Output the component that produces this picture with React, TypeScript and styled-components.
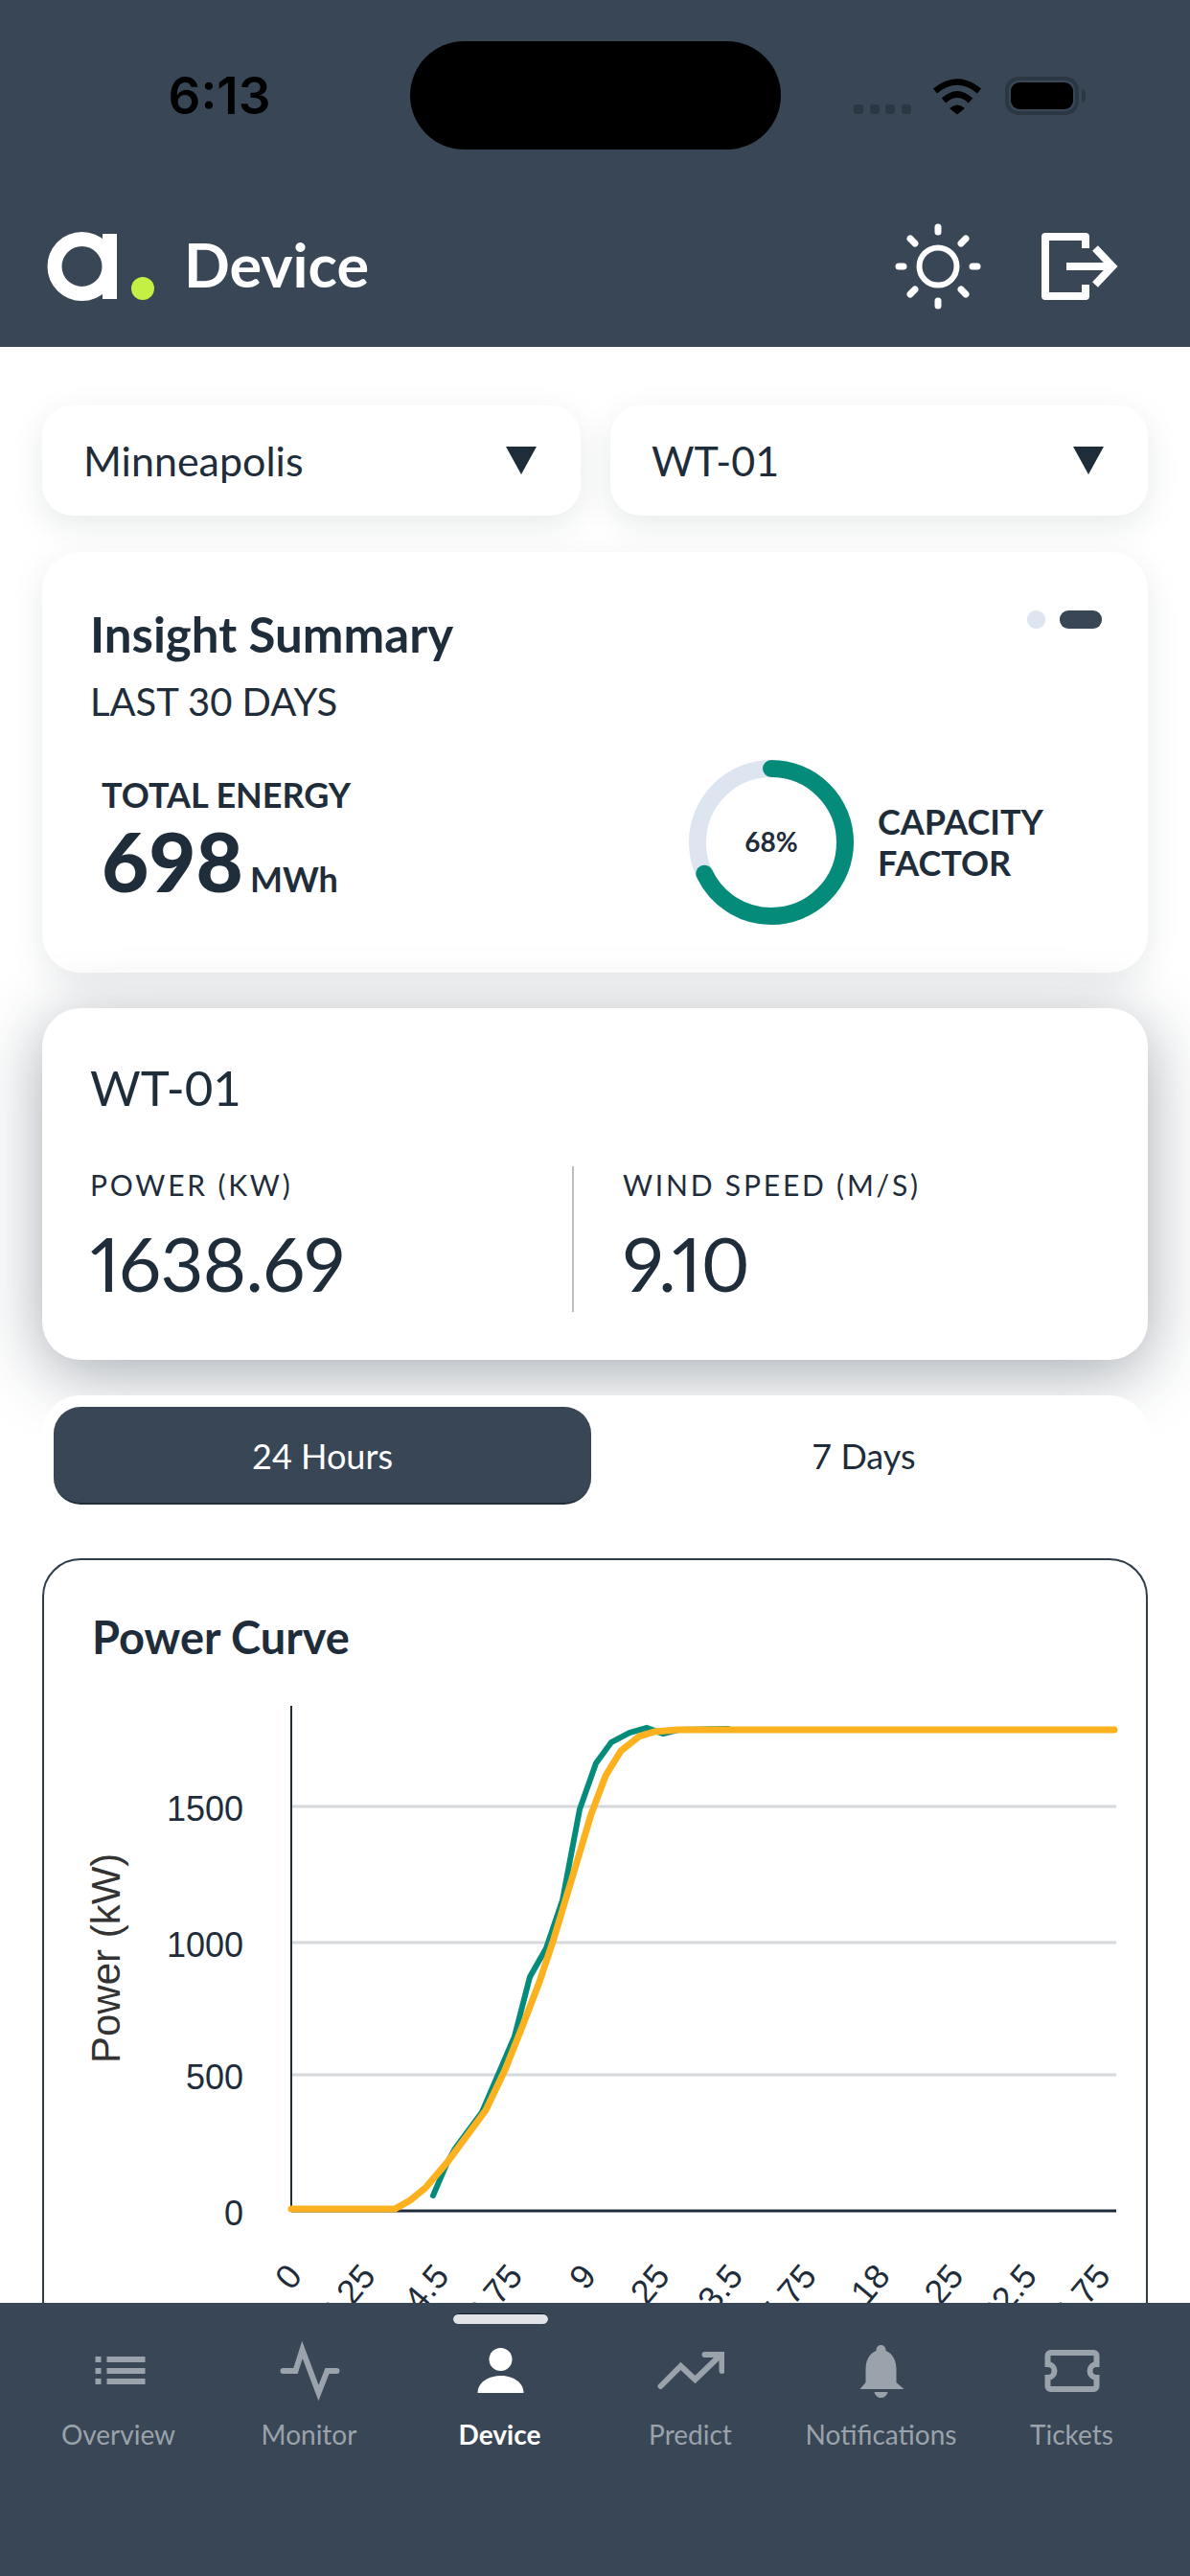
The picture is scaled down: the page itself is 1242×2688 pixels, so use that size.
import React from 'react';
import styled, { createGlobalStyle } from 'styled-components';

const GlobalStyle = createGlobalStyle`
  html, body {
    margin: 0;
    padding: 0;
    background: #fff;
  }
  * {
    box-sizing: border-box;
  }
`;

const INK = '#1f2d3b';
const SLATE = '#394655';
const TEAL = '#058b7a';
const AMBER = '#fdb11f';
const MUTED = '#9aa2ab';
const BODY_FONT = 'Lato, "Noto Sans", sans-serif';
const CHART_FONT = '"Liberation Sans", Arial, sans-serif';

const Screen = styled.div`
  width: 1242px;
  height: 2688px;
  display: flex;
  flex-direction: column;
  overflow: hidden;
  font-family: ${BODY_FONT};
  color: ${INK};
`;

const Header = styled.header`
  flex: 0 0 362px;
  background: ${SLATE};
`;

const StatusBar = styled.div`
  display: grid;
  grid-template-columns: 428px 387px 1fr;
  padding-top: 43px;
`;

const Clock = styled.div`
  padding-left: 30px;
  text-align: center;
  font-family: Inter, sans-serif;
  font-size: 53px;
  font-weight: 600;
  line-height: 114px;
  color: #000;
`;

const Island = styled.div`
  height: 113px;
  border-radius: 57px;
  background: #000;
`;

const StatusIcons = styled.svg`
  display: block;
  margin: 32px 0 0 70px;
`;

const TitleRow = styled.div`
  display: flex;
  align-items: center;
  height: 100px;
  margin-top: 71px;
  padding-left: 45px;
`;

const PageTitle = styled.h1`
  flex: 1;
  margin: -6px 0 0 27px;
  font-size: 63px;
  font-weight: 700;
  color: #fff;
`;

const SunIcon = styled.svg`
  display: block;
`;

const ExitIcon = styled.svg`
  display: block;
  margin: 0 69px 0 54px;
`;

const Content = styled.main`
  flex: 1;
  min-height: 0;
  overflow: hidden;
  padding: 61px 44px 0;
`;

const SelectRow = styled.div`
  display: grid;
  grid-template-columns: 562px 561px;
  gap: 31px;
`;

const Select = styled.div`
  display: flex;
  align-items: center;
  justify-content: space-between;
  height: 115px;
  padding: 0 46px 0 43px;
  border-radius: 32px;
  background: #fff;
  box-shadow: 0 10px 34px rgba(30, 45, 60, 0.1);
  font-size: 43px;
`;

const Caret = styled.span`
  width: 0;
  height: 0;
  border-left: 16px solid transparent;
  border-right: 16px solid transparent;
  border-top: 29px solid ${INK};
`;

const InsightCard = styled.section`
  height: 439px;
  margin-top: 38px;
  padding: 56px 48px 0 50px;
  border-radius: 40px;
  background: #fff;
  box-shadow: 0 10px 34px rgba(30, 45, 60, 0.1);
`;

const InsightTop = styled.div`
  display: flex;
  justify-content: space-between;
`;

const CardTitle = styled.h2`
  margin: 0;
  font-size: 51px;
  font-weight: 700;
  line-height: 60px;
`;

const Subtitle = styled.div`
  margin-top: 16px;
  font-size: 40px;
  line-height: 48px;
`;

const Pager = styled.div`
  display: flex;
  gap: 15px;
  margin-top: 5px;
`;

const PagerDot = styled.span<{ $active?: boolean }>`
  width: ${({ $active }) => ($active ? '44px' : '19px')};
  height: 19px;
  border-radius: 9px;
  background: ${({ $active }) => ($active ? SLATE : '#dde5f0')};
`;

const InsightBody = styled.div`
  display: grid;
  grid-template-columns: 625px auto;
  margin-top: 37px;
`;

const EnergyBlock = styled.div`
  padding: 15px 0 0 12px;
`;

const EnergyLabel = styled.div`
  font-size: 36px;
  font-weight: 700;
  line-height: 42px;
`;

const EnergyValue = styled.div`
  display: flex;
  align-items: baseline;
  gap: 7px;
  margin-top: 4px;
  font-size: 85px;
  font-weight: 900;
  line-height: 88px;
`;

const EnergyUnit = styled.span`
  font-size: 36px;
  font-weight: 700;
`;

const CapacityBlock = styled.div`
  display: flex;
  align-items: center;
  gap: 25px;
`;

const CapacityLabel = styled.div`
  font-size: 36px;
  font-weight: 700;
  line-height: 43px;
`;

const LiveCard = styled.section`
  height: 367px;
  margin-top: 37px;
  padding: 52px 50px 0;
  border-radius: 40px;
  background: #fff;
  box-shadow: 0 14px 70px rgba(30, 45, 60, 0.4);
`;

const DeviceName = styled.div`
  font-size: 51px;
  line-height: 62px;
`;

const Readings = styled.div`
  display: grid;
  grid-template-columns: 503px 1fr;
  margin-top: 51px;
  height: 152px;
`;

const Reading = styled.div<{ $divided?: boolean }>`
  padding-left: ${({ $divided }) => ($divided ? '51px' : '0')};
  border-left: ${({ $divided }) => ($divided ? '2px solid #b9bec4' : 'none')};
`;

const ReadingLabel = styled.div`
  margin-top: 2px;
  font-size: 30px;
  line-height: 34px;
  letter-spacing: 2.8px;
`;

const ReadingValue = styled.div`
  margin-top: 21px;
  font-size: 78px;
  font-variant-numeric: proportional-nums;
  letter-spacing: -0.8px;
  line-height: 88px;
`;

const TabCard = styled.div`
  display: grid;
  grid-template-columns: 561px 1fr;
  height: 126px;
  margin-top: 37px;
  padding: 12px 12px 0;
  border-radius: 40px;
  background: #fff;
`;

const Tab = styled.div<{ $active?: boolean }>`
  height: 102px;
  border-radius: 28px;
  background: ${({ $active }) => ($active ? SLATE : 'transparent')};
  border-bottom: ${({ $active }) => ($active ? `2px solid ${INK}` : 'none')};
  color: ${({ $active }) => ($active ? '#fff' : INK)};
  font-size: 36px;
  line-height: 102px;
  text-align: center;
`;

const ChartCard = styled.section`
  margin-top: 44px;
  border: 2px solid #2f3d4b;
  border-radius: 40px;
  background: #fff;
`;

const ChartTitle = styled.h2`
  margin: 0;
  padding: 50px 0 0 50px;
  height: 112px;
  font-size: 47px;
  font-weight: 700;
  line-height: 60px;
`;

const ChartSvg = styled.svg`
  display: block;
  font-family: ${CHART_FONT};
`;

const BottomNav = styled.nav`
  position: relative;
  flex: 0 0 285px;
  display: grid;
  grid-template-columns: repeat(6, 199px);
  padding: 37px 24px 0;
  background: ${SLATE};
`;

const NavHandle = styled.span`
  position: absolute;
  top: 11px;
  left: 473px;
  width: 99px;
  height: 11px;
  border-radius: 6px;
  background: #e1e3e7;
  border-top: 1px solid #0f1c2b;
`;

const NavItem = styled.div<{ $active?: boolean }>`
  display: flex;
  flex-direction: column;
  align-items: center;
  height: 130px;
  color: ${({ $active }) => ($active ? '#fff' : MUTED)};
`;

const NavIcon = styled.svg`
  display: block;
`;

const NavLabel = styled.span<{ $active?: boolean }>`
  margin-top: 13px;
  font-size: 28px;
  font-weight: ${({ $active }) => ($active ? 700 : 400)};
  line-height: 34px;
`;

const Y_TICKS = [
  { label: '1500', y: 1885 },
  { label: '1000', y: 2027 },
  { label: '500', y: 2165 },
  { label: '0', y: 2307 },
];

const X_TICKS = ['0', '2.25', '4.5', '6.75', '9', '11.25', '13.5', '15.75', '18', '20.25', '22.5', '24.75'];

const MEASURED =
  '452,2291 467,2256 475,2242 503,2204 522,2160 537,2125 553,2063 570,2033 587,1983 605,1888 622,1840 638,1818 657,1808 675,1803 692,1809 708,1805 760,1804';
const EXPECTED =
  '304,2305 412,2305 428,2296 444,2283 467,2256 507,2202 527,2160 545,2115 563,2068 578,2023 597,1960 617,1893 632,1853 648,1827 667,1812 683,1807 707,1805 1163,1805';

const PowerChart = () => (
  <ChartSvg width={1150} height={700} viewBox="46 1740 1150 700">
    <text transform="translate(125 2153) rotate(-90)" fontSize={42} fill="#333">
      Power (kW)
    </text>
    {Y_TICKS.map(({ label, y }) => (
      <g key={label}>
        {label !== '0' && <line x1={304} x2={1165} y1={y} y2={y} stroke="#d5d8dc" strokeWidth={3} />}
        <text x={254} y={y + 15} fontSize={36} textAnchor="end" fill={INK}>
          {label}
        </text>
      </g>
    ))}
    <line x1={304} x2={304} y1={1780} y2={2308} stroke={INK} strokeWidth={2} />
    <line x1={304} x2={1165} y1={2307} y2={2307} stroke={INK} strokeWidth={3} />
    <polyline points={MEASURED} fill="none" stroke={TEAL} strokeWidth={6} strokeLinecap="round" />
    <polyline points={EXPECTED} fill="none" stroke={AMBER} strokeWidth={7} strokeLinecap="round" />
    {X_TICKS.map((label, i) => (
      <text
        key={label}
        transform={`translate(${317 + i * 76.7} 2376) rotate(-50)`}
        fontSize={36}
        textAnchor="end"
        fill={INK}
      >
        {label}
      </text>
    ))}
  </ChartSvg>
);

const CapacityRing = ({ percent }: { percent: number }) => (
  <svg width={172} height={172} viewBox="0 0 172 172">
    <circle cx={86} cy={86} r={77} fill="none" stroke="#dde5f0" strokeWidth={18} />
    <circle
      cx={86}
      cy={86}
      r={77}
      fill="none"
      stroke={TEAL}
      strokeWidth={18}
      strokeLinecap="round"
      pathLength={100}
      strokeDasharray={`${percent} 100`}
      transform="rotate(-90 86 86)"
    />
    <text x={86} y={96} fontSize={28} fontWeight={700} textAnchor="middle" fill={INK}>
      {percent}%
    </text>
  </svg>
);

const SUN_RAYS = [0, 45, 90, 135, 180, 225, 270, 315];

const navItems = [
  {
    label: 'Overview',
    viewBox: '88.5 2440 70 70',
    icon: (
      <g fill="currentColor">
        <rect x={99} y={2459} width={6} height={6} />
        <rect x={99} y={2471} width={6} height={6} />
        <rect x={99} y={2482} width={6} height={6} />
        <rect x={111} y={2459} width={40} height={6} />
        <rect x={111} y={2471} width={40} height={6} />
        <rect x={111} y={2482} width={40} height={6} />
      </g>
    ),
  },
  {
    label: 'Monitor',
    viewBox: '287.5 2440 70 70',
    icon: (
      <polyline
        points="295,2474 308,2474 315,2452 332,2497 341,2474 351,2474"
        fill="none"
        stroke="currentColor"
        strokeWidth={6}
        strokeLinecap="round"
        strokeMiterlimit={8}
      />
    ),
  },
  {
    label: 'Device',
    viewBox: '486.5 2440 70 70',
    active: true,
    icon: (
      <g fill="currentColor">
        <circle cx={522} cy={2462} r={12} />
        <path d="M498 2497c0-11 11-18 24-18s24 7 24 18z" />
      </g>
    ),
  },
  {
    label: 'Predict',
    viewBox: '685.5 2440 70 70',
    icon: (
      <g fill="none" stroke="currentColor" strokeWidth={6} strokeLinecap="round">
        <polyline points="689,2490 710,2469 725,2483 751,2458" />
        <polyline points="735,2457 753,2457 753,2474" />
      </g>
    ),
  },
  {
    label: 'Notifications',
    viewBox: '884.5 2440 70 70',
    icon: (
      <g fill="currentColor">
        <circle cx={919} cy={2452} r={5} />
        <path d="M897 2493l6-7v-14c0-12 7-20 16-20s16 8 16 20v14l8 7z" />
        <path d="M912 2496h14c-1 4-4 6-7 6s-6-2-7-6z" />
      </g>
    ),
  },
  {
    label: 'Tickets',
    viewBox: '1083.5 2440 70 70',
    icon: (
      <path
        d="M1096 2455h45a3 3 0 0 1 3 3v9a7 7 0 0 0 0 14v9a3 3 0 0 1-3 3h-45a3 3 0 0 1-3-3v-9a7 7 0 0 0 0-14v-9a3 3 0 0 1 3-3z"
        fill="none"
        stroke="currentColor"
        strokeWidth={6}
      />
    ),
  },
];

const App: React.FC = () => (
  <>
    <GlobalStyle />
    <Screen>
      <Header>
        <StatusBar>
          <Clock>6:13</Clock>
          <Island />
          <StatusIcons width={255} height={50} viewBox="885 75 255 50">
            <g fill="#2b3743">
              <rect x={891} y={109} width={10} height={10} rx={3} />
              <rect x={908} y={109} width={10} height={10} rx={3} />
              <rect x={924} y={109} width={10} height={10} rx={3} />
              <rect x={941} y={109} width={10} height={10} rx={3} />
              <path d="M1129 93c3 0 4 3 4 7s-1 7-4 7z" />
            </g>
            <g fill="none" stroke="#000" strokeWidth={6.5}>
              <path d="M976 95q23-19 46 0" />
              <path d="M985 105q14-13 28 0" />
            </g>
            <path d="M991 113q8-7 16 0l-8 6.500z" fill="#000" />
            <rect x={1051} y={82} width={73} height={36} rx={12} fill="none" stroke="#2b3743" strokeWidth={4} />
            <rect x={1055} y={86} width={65} height={28} rx={9} fill="#000" />
          </StatusIcons>
        </StatusBar>
        <TitleRow>
          <svg width={120} height={75} viewBox="45 240 120 75">
            <circle cx={85.5} cy={277} r={28.5} fill="none" stroke="#fff" strokeWidth={15} />
            <rect x={107} y={243} width={15} height={68} fill="#fff" />
            <circle cx={149} cy={300} r={12} fill="#c3f042" />
          </svg>
          <PageTitle>Device</PageTitle>
          <SunIcon width={100} height={100} viewBox="929 227 100 100">
            <circle cx={979} cy={277} r={19.5} fill="none" stroke="#fff" strokeWidth={6} />
            <g stroke="#fff" strokeWidth={7} strokeLinecap="round">
              {SUN_RAYS.map((angle) => (
                <line
                  key={angle}
                  x1={979}
                  x2={979}
                  y1={236}
                  y2={angle % 90 === 0 ? 241 : 243}
                  transform={`rotate(${angle} 979 277)`}
                />
              ))}
            </g>
          </SunIcon>
          <ExitIcon width={90} height={78} viewBox="1083 238 90 78">
            <path d="M1133 258v-12h-42v62h42v-12" fill="none" stroke="#fff" strokeWidth={8} strokeLinejoin="round" />
            <path d="M1113 277h47M1143 258l18 19-18 19" fill="none" stroke="#fff" strokeWidth={8} />
          </ExitIcon>
        </TitleRow>
      </Header>

      <Content>
        <SelectRow>
          <Select>
            Minneapolis
            <Caret />
          </Select>
          <Select>
            WT-01
            <Caret />
          </Select>
        </SelectRow>

        <InsightCard>
          <InsightTop>
            <div>
              <CardTitle>Insight Summary</CardTitle>
              <Subtitle>LAST 30 DAYS</Subtitle>
            </div>
            <Pager>
              <PagerDot />
              <PagerDot $active />
            </Pager>
          </InsightTop>
          <InsightBody>
            <EnergyBlock>
              <EnergyLabel>TOTAL ENERGY</EnergyLabel>
              <EnergyValue>
                698
                <EnergyUnit>MWh</EnergyUnit>
              </EnergyValue>
            </EnergyBlock>
            <CapacityBlock>
              <CapacityRing percent={68} />
              <CapacityLabel>
                CAPACITY
                <br />
                FACTOR
              </CapacityLabel>
            </CapacityBlock>
          </InsightBody>
        </InsightCard>

        <LiveCard>
          <DeviceName>WT-01</DeviceName>
          <Readings>
            <Reading>
              <ReadingLabel>POWER (KW)</ReadingLabel>
              <ReadingValue>1638.69</ReadingValue>
            </Reading>
            <Reading $divided>
              <ReadingLabel>WIND SPEED (M/S)</ReadingLabel>
              <ReadingValue>9.10</ReadingValue>
            </Reading>
          </Readings>
        </LiveCard>

        <TabCard>
          <Tab $active>24 Hours</Tab>
          <Tab>7 Days</Tab>
        </TabCard>

        <ChartCard>
          <ChartTitle>Power Curve</ChartTitle>
          <PowerChart />
        </ChartCard>
      </Content>

      <BottomNav>
        <NavHandle />
        {navItems.map((item) => (
          <NavItem key={item.label} $active={item.active}>
            <NavIcon width={70} height={70} viewBox={item.viewBox}>
              {item.icon}
            </NavIcon>
            <NavLabel $active={item.active}>{item.label}</NavLabel>
          </NavItem>
        ))}
      </BottomNav>
    </Screen>
  </>
);

export default App;
